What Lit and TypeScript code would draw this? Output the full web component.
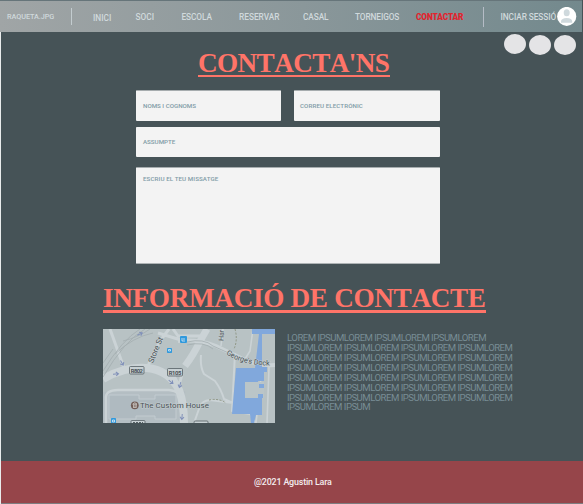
import { LitElement, html, css, svg } from "lit";
import { customElement } from "lit/decorators.js";

@customElement("site-nav")
class SiteNav extends LitElement {
  static styles = css`
    :host { display: block; }
    .bar {
      box-sizing: border-box; height: 32px; width: 582px;
      border-top: 1px solid #66757a;
      background: linear-gradient(90deg, #a0a5a6 0%, #8a979a 52%, #73898d 100%);
      display: grid; align-items: center;
      grid-template-columns: 64px 22px 42.5px 46px 57.5px 64px 52px 61px 67px 17.5px 56px 20px;
      padding-left: 7px;
      font: 500 8.3px/10px Roboto, sans-serif; color: #d0d9dc;
      white-space: nowrap;
    }
    .brand { font-size: 7.3px; letter-spacing: -0.07px; }
    .low { padding-top: 3px; }
    .item { padding-top: 1px; }
    .current { color: #e3232d; font-weight: 900; }
    .rule { width: 1px; height: 17px; background: #c3cccf; }
    .tall { height: 20px; background: #b5bcc6; }
    .avatar { display: block; width: 20px; height: 20px; }
    .t1 { letter-spacing: -0.1px; }
    .t2 { letter-spacing: -0.1px; }
    .t3 { letter-spacing: -0.08px; }
  `;
  render() {
    return html`<nav class="bar">
      <span class="brand">RAQUETA.JPG</span>
      <span class="rule"></span>
      <span class="low">INICI</span>
      <span class="item">SOCI</span>
      <span class="item t1">ESCOLA</span>
      <span class="item">RESERVAR</span>
      <span class="item t1">CASAL</span>
      <span class="item t1">TORNEIGOS</span>
      <span class="item current t2">CONTACTAR</span>
      <span class="rule tall"></span>
      <span class="item t3">INCIAR SESSIÓ</span>
      <svg class="avatar" viewBox="0 0 20 20">
        <ellipse cx="9.7" cy="9.4" rx="9.6" ry="9.5" fill="#fff" />
        <ellipse cx="9.7" cy="5.8" rx="3" ry="3.5" fill="#cfd9dd" />
        <path d="M4 15.7V14.4C4 12.1 6.2 10.9 9.7 10.9S15.2 12.1 15.2 14.4V15.7Z" fill="#cfd9dd" />
      </svg>
    </nav>`;
  }
}

@customElement("street-map")
class StreetMap extends LitElement {
  static styles = css`
    :host { display: block; width: 172px; height: 94px; }
    .map { display: block; width: 172px; height: 94px; }
    .label { font-family: Roboto, sans-serif; fill: #4a5255; paint-order: stroke; stroke: #c5ced1; stroke-width: 1px; }
    .sign { font: 700 5.8px Roboto, sans-serif; fill: #475156; }
  `;
  render() {
    const arrow = (x: number, y: number, a: number) => svg`
      <path d="M-3 0H2M0 -2L2.5 0L0 2" transform="translate(${x} ${y}) rotate(${a})"
        fill="none" stroke="#8090b9" stroke-width="1" />`;
    return html`<svg class="map" viewBox="0 0 172 94">
      <rect width="172" height="94" fill="#b8c2c4" />
      <path d="M0 63L36 61 82 62 83 94H0Z" fill="#b4bec3" />
      <path d="M6 66H36V70H52V66H73V90H52V87H33V90H6Z" fill="#afbac0" stroke="#c2cbd0" />
      <g fill="none" stroke="#cbd3d6" stroke-linejoin="round">
        <path d="M7 0L21 39M44 40Q49 25 60 8L66 0M55 4L78 11 84 8M70 0L75 7H98" stroke-width="3" />
        <path d="M0 50Q22 37 44 39Q66 41 76 61Q81 74 81 94" stroke-width="8" />
        <path d="M3 94V70Q2 61 15 61H66Q78 62 81 74" stroke-width="2.5" />
        <path d="M70 45L76 57 79 45" stroke-width="3" />
        <path d="M82 37Q91 25 96 14L104 0" stroke-width="7" />
        <path d="M75 12Q96 10 113 17L142 31Q156 37 172 36" stroke-width="4" />
        <path d="M98 26Q97 38 101 45L112 52Q118 60 121 70L130 74M91 94L97 77Q99 72 107 71L130 74M132 24L129 82L147 85L153 94" stroke-width="2" />
        <path d="M150 0L147 22L142 30M159 39L153 94M166 38L164 94M120 0L118 17" stroke-width="1.6" />
      </g>
      <g fill="none" stroke="#a3adb0" stroke-width="0.8">
        <path d="M0 42Q19 11 37 0M0 48Q21 12 42 0M0 34L10 20M20 12Q36 8 47 0M12 25Q30 8 50 4" />
        <path d="M84 13Q101 9 110 17L139 30M84 16Q101 12 110 20" />
      </g>
      <path d="M132 0Q135 11 131 20M106 71Q116 69 123 74" fill="none" stroke="#8f9684" stroke-dasharray="2 1.5" />
      <g fill="#81a8dc">
        <path d="M149 0H172V5H159V38H164V43H161V52H155V54H142V68H159V86H153L151 94H148L147 85H129L133 39H152L156 5H149Z" />
      </g>
      <path d="M142 53H161V69H142Z" fill="#bac5c8" />
      <path d="M156 55H161V59H156ZM155 65H160V69H155Z" fill="#81a8dc" />
      ${arrow(37, 5, -25)}${arrow(19, 34, 60)}${arrow(13, 45, -5)}
      ${arrow(68, 53, 40)}${arrow(77, 56, 105)}${arrow(79, 88, 95)}
      <g fill="#3099dc">
        <rect x="77" y="7" width="7" height="7" rx="1" />
        <rect x="64" y="19" width="5" height="5" rx="0.8" />
        <rect x="8" y="89" width="5" height="6" rx="0.8" />
      </g>
      <path d="M79 9V12H82M80 10H82M65.5 20.5H67.5V22H65.5ZM9.5 91H11.5V93H9.5Z" fill="none" stroke="#dceaf5" stroke-width="0.8" />
      <g fill="#c7d0d3" stroke="#566064" stroke-width="0.8">
        <rect x="26.5" y="37.5" width="14.5" height="7.5" rx="1" />
        <rect x="64.5" y="39.5" width="15" height="7.5" rx="1" />
        <rect x="28" y="91.5" width="14" height="7" rx="1" />
        <rect x="91" y="92" width="14" height="7" rx="1" />
      </g>
      <text class="sign" x="27.8" y="43.5" textLength="12">R802</text>
      <text class="sign" x="65.8" y="45.5" textLength="12.5">R105</text>
      <path d="M30 93.5H40" stroke="#566064" stroke-dasharray="2 1" />
      <text class="label" font-size="7.8" textLength="27" transform="translate(50 34.5) rotate(-68)">Store St</text>
      <text class="label" font-size="7" transform="translate(120.5 12) rotate(-88)">Har</text>
      <path id="dock" d="M123 25Q140 37 171 36.5" fill="none" />
      <text class="label" font-size="7.3"><textPath href="#dock" textLength="46">George's Dock</textPath></text>
      <circle cx="31.8" cy="76.3" r="3.9" fill="#715c55" />
      <path d="M29.7 75.2L31.8 73.7 34 75.2ZM30 78.5H33.7M30.5 75.5V78M32 75.5V78M33.3 75.5V78" fill="none" stroke="#d9d9d5" stroke-width="0.7" />
      <text class="label" font-size="8" x="37" y="79" textLength="69">The Custom House</text>
    </svg>`;
  }
}

@customElement("app-root")
class AppRoot extends LitElement {
  static styles = css`
    :host { display: block; width: 583px; height: 504px; background: #465357; font-family: Roboto, sans-serif; }
    .page { height: 504px; box-sizing: border-box; display: flex; flex-direction: column; position: relative; overflow: hidden; }
    .edge { position: absolute; left: 0; top: 32px; bottom: 0; width: 1px; background: #e9ecec; }
    .social { position: absolute; left: 504px; top: 34px; display: flex; gap: 3px; }
    .dot { width: 22px; height: 20px; border-radius: 50%; background: #e4e4e6; }
    .down { margin-top: 1px; }
    .title {
      margin: 0; align-self: flex-start; box-sizing: border-box; white-space: nowrap;
      font: 700 27.2px/30px "Liberation Serif", serif; color: #ff7468; font-kerning: none;
    }
    .first { margin: 16px 0 0 198px; height: 29px; width: 192px; border-bottom: 2px solid; letter-spacing: -0.6px; }
    .second { margin: 20px 0 0 103px; height: 29px; width: 383px; border-bottom: 3px solid; line-height: 28px; letter-spacing: -0.32px; }
    .form {
      margin: 13px 0 0 136px; width: 304px; display: grid;
      grid-template-columns: 145px 146px; column-gap: 13px;
      grid-template-rows: 31px 36px 107px;
      font: 500 6.2px/8px Roboto, sans-serif; color: #7f9ba6;
    }
    .field { box-sizing: border-box; background: #f3f3f3; border-top: 1px solid #a6acae; padding: 11px 7px; border-radius: 1px; white-space: nowrap; }
    .mail { padding-left: 6px; letter-spacing: 0.08px; }
    .wide { grid-column: 1 / 3; margin-top: 6px; height: 30px; padding-top: 10px; border-top-color: #f3f3f3; }
    .message { grid-column: 1 / 3; margin-top: 10px; height: 97px; padding-top: 7px; border-bottom: 1px solid #aeb3b5; letter-spacing: 0.09px; }
    .info { margin: 16px 0 0 103px; display: flex; gap: 12px; height: 94px; }
    .copy { margin: 4px 0 0; width: 232px; font: 400 9.6px/9.92px Roboto, sans-serif; color: #788d95; letter-spacing: -0.52px; }
    .line { display: block; white-space: nowrap; }
    .footer {
      box-sizing: border-box; margin: auto 0 0 1px; height: 43px; border-bottom: 1px solid #7d7d80;
      background: #96454a; color: #f3edef; font: 500 8.9px/42px Roboto, sans-serif; letter-spacing: -0.16px; padding-left: 253px;
    }
  `;
  render() {
    const lines = [
      "LOREM IPSUMLOREM IPSUMLOREM IPSUMLOREM",
      ...Array(6).fill("IPSUMLOREM IPSUMLOREM IPSUMLOREM IPSUMLOREM"),
      "IPSUMLOREM IPSUM",
    ];
    return html`<main class="page">
      <site-nav></site-nav>
      <div class="edge"></div>
      <div class="social"><div class="dot"></div><div class="dot down"></div><div class="dot down"></div></div>
      <h1 class="title first">CONTACTA'NS</h1>
      <section class="form">
        <div class="field">NOMS I COGNOMS</div>
        <div class="field mail">CORREU ELECTRÓNIC</div>
        <div class="field wide">ASSUMPTE</div>
        <div class="field message">ESCRIU EL TEU MISSATGE</div>
      </section>
      <h2 class="title second">INFORMACIÓ DE CONTACTE</h2>
      <section class="info">
        <street-map></street-map>
        <p class="copy">${lines.map((l) => html`<span class="line">${l}</span>`)}</p>
      </section>
      <footer class="footer">@2021 Agustin Lara</footer>
    </main>`;
  }
}
